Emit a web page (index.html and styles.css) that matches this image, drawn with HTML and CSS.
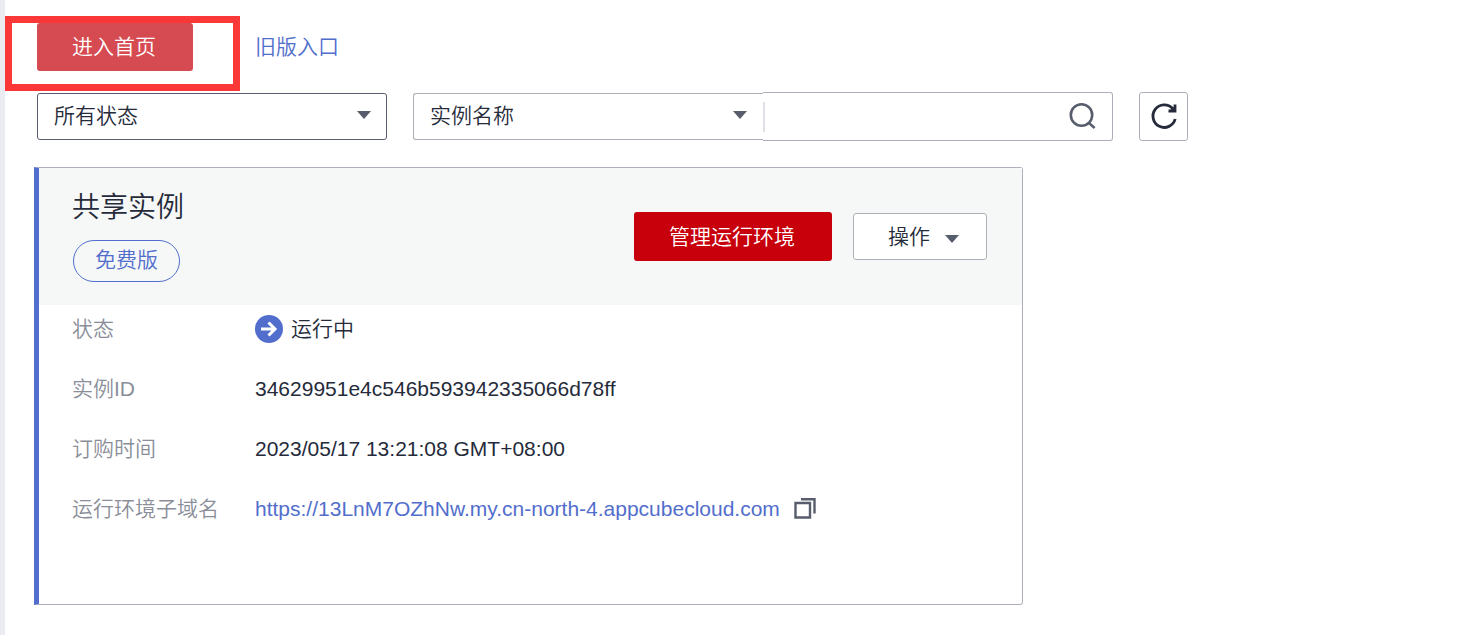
FILE: index.html
```html
<!DOCTYPE html>
<html lang="zh-CN">
<head>
<meta charset="utf-8">
<meta name="viewport" content="width=device-width, initial-scale=1">
<title>共享实例</title>
<link rel="stylesheet" href="styles.css">
</head>
<body>
<main class="page">
  <div class="actions">
    <button class="btn btn-home" type="button">进入首页</button>
    <a class="link" href="#old">旧版入口</a>
    <span class="highlight" aria-hidden="true"></span>
  </div>

  <form class="filters">
    <div class="select-wrap">
      <select class="select select-active" aria-label="状态">
        <option>所有状态</option>
      </select>
      <svg class="caret" viewBox="0 0 14 8" aria-hidden="true"><path d="M0 0h14L7 8z"/></svg>
    </div>
    <div class="search-group">
      <div class="select-wrap">
        <select class="select select-joined" aria-label="搜索字段">
          <option>实例名称</option>
        </select>
        <svg class="caret" viewBox="0 0 14 8" aria-hidden="true"><path d="M0 0h14L7 8z"/></svg>
      </div>
      <div class="search">
        <input class="search-input" type="text" aria-label="搜索">
        <button class="icon-btn" type="button" aria-label="搜索">
          <svg class="icon-search" viewBox="0 0 28 28" aria-hidden="true"><circle cx="12.500" cy="12" r="10.700"/><path d="M19.600 19.600l6 5.400"/></svg>
        </button>
      </div>
    </div>
    <button class="refresh" type="button" aria-label="刷新">
      <svg class="icon-refresh" viewBox="0 0 28 28" aria-hidden="true"><path class="arc" d="M25.200 16A11.300 11.300 0 1 1 22.600 5.500"/><path class="head" d="M25 1.500V8h-6.500"/><path class="fill" d="M18.500 8.500L25 3v5.500z"/></svg>
    </button>
  </form>

  <section class="card">
    <header class="card-head">
      <div class="card-title">
        <h2 class="title">共享实例</h2>
        <span class="badge">免费版</span>
      </div>
      <div class="card-buttons">
        <button class="btn btn-manage" type="button">管理运行环境</button>
        <button class="btn btn-more" type="button">操作<svg class="caret-inline" viewBox="0 0 14 8" aria-hidden="true"><path d="M0 0h14L7 8z"/></svg></button>
      </div>
    </header>
    <dl class="details">
      <dt>状态</dt>
      <dd class="status">
        <svg class="icon-status" viewBox="0 0 28 28" aria-hidden="true"><circle cx="14" cy="14" r="14"/><path d="M6 14h14M13.500 7.500l6.500 6.500-6.500 6.500"/></svg>
        运行中
      </dd>
      <dt>实例ID</dt>
      <dd>34629951e4c546b593942335066d78ff</dd>
      <dt>订购时间</dt>
      <dd>2023/05/17 13:21:08 GMT+08:00</dd>
      <dt>运行环境子域名</dt>
      <dd class="domain">
        <a class="link" href="https://13LnM7OZhNw.my.cn-north-4.appcubecloud.com">https://13LnM7OZhNw.my.cn-north-4.appcubecloud.com</a>
        <button class="icon-btn" type="button" aria-label="复制">
          <svg class="icon-copy" viewBox="0 0 22 22" aria-hidden="true"><path d="M1.500 5h14.500v14.500H1.500zM7 1.200h13.500V15.500"/></svg>
        </button>
      </dd>
    </dl>
  </section>
</main>
</body>
</html>
```

FILE: styles.css
```css
* {
  box-sizing: border-box;
}

html {
  background: #fff;
}

body {
  margin: 0;
  min-height: 100vh;
  border-left: 5px solid #ebecf2;
  color: #252b3a;
  font: 350 21px/32px "Liberation Sans", "Noto Sans CJK SC", sans-serif;
}

button,
input,
select {
  font: inherit;
  color: inherit;
}

button {
  padding: 0;
  cursor: pointer;
}

.page {
  padding: 23px 32px 30px;
}

.link {
  color: #526ecc;
  text-decoration: none;
}

.actions {
  position: relative;
  display: flex;
  align-items: center;
  gap: 62px;
}

.btn {
  height: 49px;
  border: 0;
  border-radius: 3px;
  color: #fff;
}

.btn-home {
  height: 48px;
  padding: 0 37px 0 35px;
  background: #d64a52;
}

/* Frame drawn over the home button */
.highlight {
  position: absolute;
  top: -7px;
  left: -32px;
  width: 235px;
  height: 75px;
  border: 7px solid #fb3838;
  pointer-events: none;
}

.filters {
  display: flex;
  align-items: center;
  gap: 26px;
  margin-top: 21px;
}

.select-wrap {
  position: relative;
  flex: 0 1 350px;
}

.select {
  display: block;
  width: 100%;
  height: 47px;
  padding: 0 44px 2px 16px;
  border: 1px solid #adb0b8;
  border-radius: 3px;
  background: #fff;
  appearance: none;
}

.select-active {
  border-color: #575d6c;
}

.select-joined {
  border-right: 0;
  border-radius: 3px 0 0 3px;
}

.caret {
  position: absolute;
  top: 18px;
  right: 16px;
  width: 14px;
  height: 8px;
  fill: #575d6c;
}

.search-group {
  display: flex;
  flex: 0 1 700px;
  align-items: center;
}

.search {
  display: flex;
  flex: 1 1 350px;
  align-items: center;
  height: 49px;
  padding-right: 15px;
  border: 1px solid #adb0b8;
  border-left: 0;
  border-radius: 0 3px 3px 0;
}

.search-input {
  flex: 1;
  min-width: 0;
  height: 30px;
  padding: 0 16px;
  border: 0;
  border-left: 2px solid #dfe1e6;
  background: none;
  outline: 0;
}

.icon-btn {
  display: flex;
  border: 0;
  background: none;
}

.icon-search {
  width: 28px;
  height: 28px;
  fill: none;
  stroke: #575d6c;
  stroke-width: 2.6;
}

.refresh {
  display: flex;
  flex: none;
  align-items: center;
  justify-content: center;
  width: 49px;
  height: 49px;
  border: 1px solid #adb0b8;
  border-radius: 3px;
  background: #fff;
}

.icon-refresh {
  width: 28px;
  height: 28px;
  fill: none;
  stroke: #252b3a;
  stroke-width: 2.8;
}

.icon-refresh .fill {
  fill: #252b3a;
  stroke: none;
}

.card {
  max-width: 989px;
  margin: 26px 0 0 -3px;
  border: 1px solid #adb0b8;
  border-left: 5px solid #526ecc;
  border-radius: 0 3px 3px 0;
}

.card-head {
  display: flex;
  align-items: center;
  justify-content: space-between;
  padding: 20px 35px 20px 33px;
  background: #f6f8f8;
}

.card-title {
  display: flex;
  flex-direction: column;
  align-items: flex-start;
  gap: 12px;
  padding-bottom: 3px;
}

.title {
  margin: 0;
  font-size: 28px;
  font-weight: inherit;
  line-height: 40px;
}

.badge {
  height: 42px;
  margin-left: 1px;
  padding: 0 21px;
  border: 1px solid #526ecc;
  border-radius: 21px;
  color: #526ecc;
  line-height: 38px;
}

.card-buttons {
  display: flex;
  align-items: center;
  gap: 21px;
}

.btn-manage {
  padding: 0 37px 0 35px;
  background: #c7000b;
}

.btn-more {
  display: flex;
  align-items: center;
  gap: 15px;
  height: 47px;
  padding: 0 27px 0 34px;
  border: 1px solid #adb0b8;
  background: #fff;
  color: #252b3a;
}

.caret-inline {
  width: 14px;
  height: 8px;
  margin-top: 4px;
  fill: #575d6c;
}

.details {
  display: grid;
  grid-template-columns: 183px 1fr;
  row-gap: 12px;
  margin: 0;
  padding: 0 33px 71px;
  line-height: 48px;
}

.details dt {
  color: #8a8e99;
}

.details dd {
  margin: 0;
}

.status,
.domain {
  display: flex;
  align-items: center;
}

.status {
  gap: 8px;
}

.domain {
  gap: 14px;
}

.icon-status {
  width: 28px;
  height: 28px;
  fill: #526ecc;
}

.icon-status path {
  fill: none;
  stroke: #fff;
  stroke-width: 3;
}

.icon-copy {
  width: 22px;
  height: 22px;
  fill: none;
  stroke: #575d6c;
  stroke-width: 2.4;
}
```
